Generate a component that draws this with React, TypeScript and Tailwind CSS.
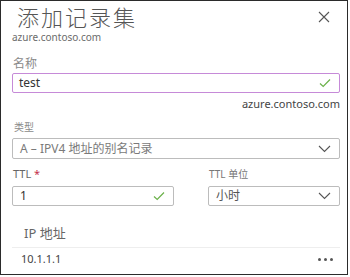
import React from "react";

const Check = () => (
  <svg width="12" height="10" viewBox="0 0 12 10" fill="none">
    <path d="M1 5.5 L4.2 8.5 L11 1.5" stroke="#6bb14a" strokeWidth="1.2" />
  </svg>
);

const Chevron = () => (
  <svg width="13" height="8" viewBox="0 0 13 8" fill="none">
    <path d="M1 1 L6.5 6.5 L12 1" stroke="#555" strokeWidth="1.1" />
  </svg>
);

export default function App() {
  return (
    <div className="w-[350px] h-[277px] bg-white" style={{ fontFamily: '"Noto Sans", "Noto Sans CJK SC", sans-serif' }}>
      <div className="w-[348px] h-[275px] border border-[#2b2b2b] relative flex flex-col pl-[11px] pr-[7px]">
        <div className="absolute right-[17px] top-[10px]">
          <svg width="12" height="12" viewBox="0 0 12 12" fill="none">
            <path d="M1 1 L11 11 M11 1 L1 11" stroke="#555" strokeWidth="1.1" />
          </svg>
        </div>
        <div className="pl-[5px] pt-[1px] h-[29px] text-[22px] leading-[28px] font-light text-[#555] tracking-[2px]" style={{ fontFamily: '"Noto Sans CJK SC", sans-serif' }}>
          添加记录集
        </div>
        <div className="text-[10px] leading-[15px] text-[#6b6b6b]">azure.contoso.com</div>
        <div className="mt-[11px] pl-[1px] text-[12px] leading-[16px] text-[#8a8a8a]">名称</div>
        <div className="mt-[1px] h-[20px] border border-[#c68ad8] rounded-[2px] flex items-center justify-between pl-[6px] pr-[8px]">
          <span className="text-[12px] text-[#333]">test</span>
          <Check />
        </div>
        <div className="mt-[4px] text-right text-[11px] leading-[14px] text-[#444]">azure.contoso.com</div>
        <div className="mt-[9px] pl-[2px] text-[10px] leading-[14px] text-[#8a8a8a]">类型</div>
        <div className="mt-[4px] h-[21px] border border-[#bcbcbc] rounded-[2px] flex items-center justify-between pl-[7px] pr-[8px]">
          <span className="text-[12px] text-[#7a7a7a]">A – IPV4 地址的别名记录</span>
          <Chevron />
        </div>
        <div className="mt-[8px] flex gap-[34px]">
          <div className="w-[162px] flex flex-col">
            <div className="pl-[1px] text-[11px] leading-[14px] text-[#666]">
              TTL <span className="text-[#c4314b]">*</span>
            </div>
            <div className="mt-[5px] h-[20px] border border-[#bcbcbc] rounded-[2px] flex items-center justify-between pl-[7px] pr-[8px]">
              <span className="text-[12px] text-[#333]">1</span>
              <Check />
            </div>
          </div>
          <div className="flex-1 flex flex-col">
            <div className="pl-[1px] text-[10px] leading-[14px] text-[#777]">TTL 单位</div>
            <div className="mt-[5px] h-[20px] border border-[#bcbcbc] rounded-[2px] flex items-center justify-between pl-[7px] pr-[8px]">
              <span className="text-[12px] text-[#555]">小时</span>
              <Chevron />
            </div>
          </div>
        </div>
        <div className="mt-[18px] pl-[12px] text-[13px] leading-[18px] text-[#666]">IP 地址</div>
        <div className="mt-[5px] border-t border-[#eeeeee] h-[24px] flex items-center justify-between pl-[9px] pr-[7px]">
          <span className="text-[11px] text-[#444]">10.1.1.1</span>
          <span className="flex gap-[3px]">
            <span className="w-[3px] h-[3px] rounded-full bg-[#555]" />
            <span className="w-[3px] h-[3px] rounded-full bg-[#555]" />
            <span className="w-[3px] h-[3px] rounded-full bg-[#555]" />
          </span>
        </div>
      </div>
    </div>
  );
}
